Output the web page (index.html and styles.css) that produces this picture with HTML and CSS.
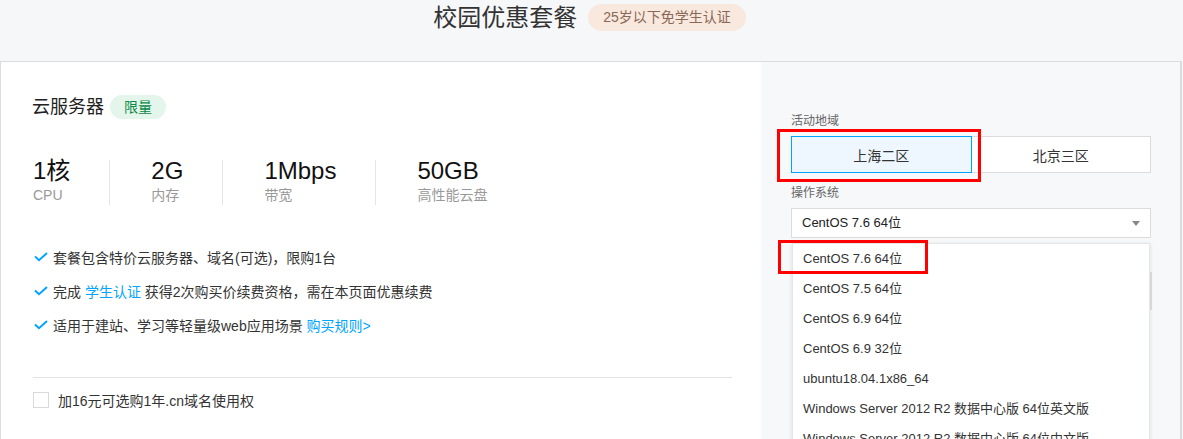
FILE: index.html
```html
<!DOCTYPE html>
<html lang="zh-CN">
<head>
<meta charset="utf-8">
<title>校园优惠套餐</title>
<link rel="stylesheet" href="styles.css">
</head>
<body>
<header class="hero">
  <h1 class="hero-title">校园优惠套餐</h1>
  <span class="hero-badge">25岁以下免学生认证</span>
</header>
<main class="card">
  <section class="product">
    <div class="product-head">
      <h2 class="product-name">云服务器</h2>
      <span class="tag-limit">限量</span>
    </div>
    <div class="specs">
      <div class="spec"><div class="spec-val">1核</div><div class="spec-lbl">CPU</div></div>
      <div class="spec"><div class="spec-val">2G</div><div class="spec-lbl">内存</div></div>
      <div class="spec"><div class="spec-val">1Mbps</div><div class="spec-lbl">带宽</div></div>
      <div class="spec"><div class="spec-val">50GB</div><div class="spec-lbl">高性能云盘</div></div>
    </div>
    <ul class="features">
      <li class="feature"><svg class="check" viewBox="0 0 14 10" width="14" height="10"><path d="M1 4.4 L5 8.2 L13 1" fill="none" stroke="#00a4ff" stroke-width="2"/></svg>套餐包含特价云服务器、域名(可选)，限购1台</li>
      <li class="feature"><svg class="check" viewBox="0 0 14 10" width="14" height="10"><path d="M1 4.4 L5 8.2 L13 1" fill="none" stroke="#00a4ff" stroke-width="2"/></svg>完成 <a class="link">学生认证</a> 获得2次购买价续费资格，需在本页面优惠续费</li>
      <li class="feature"><svg class="check" viewBox="0 0 14 10" width="14" height="10"><path d="M1 4.4 L5 8.2 L13 1" fill="none" stroke="#00a4ff" stroke-width="2"/></svg>适用于建站、学习等轻量级web应用场景 <a class="link">购买规则&gt;</a></li>
    </ul>
    <hr class="sep">
    <label class="addon"><span class="checkbox"></span>加16元可选购1年.cn域名使用权</label>
  </section>
  <aside class="config">
    <div class="field-lbl">活动地域</div>
    <div class="regions">
      <button class="region region-on">上海二区</button>
      <button class="region">北京三区</button>
    </div>
    <div class="field-lbl field-lbl-os">操作系统</div>
    <div class="select-wrap">
      <div class="select">CentOS 7.6 64位<span class="caret"></span></div>
      <ul class="dropdown">
        <li class="opt">CentOS 7.6 64位</li>
        <li class="opt">CentOS 7.5 64位</li>
        <li class="opt">CentOS 6.9 64位</li>
        <li class="opt">CentOS 6.9 32位</li>
        <li class="opt">ubuntu18.04.1x86_64</li>
        <li class="opt">Windows Server 2012 R2 数据中心版 64位英文版</li>
        <li class="opt">Windows Server 2012 R2 数据中心版 64位中文版</li>
      </ul>
      <span class="thumb"></span>
    </div>
    <span class="mark mark-region"></span>
    <span class="mark mark-os"></span>
  </aside>
</main>
</body>
</html>
```

FILE: styles.css
```css
* { box-sizing: border-box; }
html, body { margin: 0; padding: 0; }
body {
  background: #f6f7f9;
  font-family: "Liberation Sans", Arial, "Noto Sans CJK SC", sans-serif;
  color: #333;
  height: 439px;
  overflow: hidden;
}
.hero {
  height: 61px;
  display: flex;
  justify-content: center;
  align-items: flex-start;
  gap: 11px;
  padding-top: 4px;
  padding-right: 4px;
}
.hero-title {
  margin: 0;
  font-size: 24px;
  font-weight: normal;
  line-height: 27px;
  color: #333;
}
.hero-badge {
  height: 27px;
  line-height: 27px;
  padding: 0 15px;
  border-radius: 14px;
  background: #f9e8de;
  color: #8a6856;
  font-size: 14px;
}
.card {
  width: 1182px;
  border: 1px solid #dcdcdc;
  border-right-width: 2px;
  border-bottom: none;
  display: flex;
  height: 400px;
  background: #f7f8fa;
}
.product {
  width: 760px;
  background: #fff;
  padding: 33px 29px 0 31px;
}
.product-head {
  display: flex;
  align-items: center;
  gap: 6px;
  height: 24px;
}
.product-name {
  margin: 0;
  font-size: 18px;
  font-weight: normal;
  line-height: 24px;
  color: #222;
}
.tag-limit {
  height: 24px;
  line-height: 24px;
  padding: 0 14px;
  border-radius: 12px;
  background: #e4f5eb;
  color: #0c8a47;
  font-size: 14px;
}
.specs {
  display: flex;
  margin-top: 41px;
}
.spec {
  height: 45px;
  padding: 0 39px 0 41px;
  border-right: 1px solid #e5e5e5;
}
.spec:first-child { padding-left: 1px; }
.spec:last-child { border-right: none; }
.spec-val {
  font-size: 24px;
  line-height: 22px;
  height: 22px;
  color: #111;
}
.spec-lbl {
  margin-top: 3px;
  font-size: 14px;
  line-height: 20px;
  height: 20px;
  color: #999;
}
.features {
  list-style: none;
  margin: 35px 0 0;
  padding: 0;
}
.feature {
  display: flex;
  align-items: center;
  height: 34px;
  font-size: 14px;
  color: #333;
  white-space: pre;
}
.check {
  margin: 0 5px 0 2px;
  flex: none;
}
.link {
  color: #00a4ff;
  cursor: pointer;
}
.sep {
  margin: 35px 0 0 1px;
  border: none;
  border-top: 1px solid #e2e2e2;
  height: 0;
}
.addon {
  display: flex;
  align-items: center;
  margin-top: 14px;
  margin-left: 1px;
  height: 16px;
  font-size: 14px;
  color: #333;
}
.checkbox {
  width: 16px;
  height: 16px;
  border: 1px solid #d9d9d9;
  background: #fff;
  margin-right: 9px;
}
.config {
  position: relative;
  flex: 1;
  padding: 50px 29px 0 30px;
}
.field-lbl {
  font-size: 12px;
  line-height: 18px;
  color: #666;
}
.field-lbl-os { margin-top: 11px; }
.regions {
  display: flex;
  margin-top: 6px;
}
.region {
  flex: 1;
  height: 37px;
  border: 1px solid #dcdcdc;
  background: #fff;
  font: inherit;
  font-size: 14px;
  color: #333;
  padding: 0;
}
.region + .region { border-left: none; }
.region-on {
  background: #eef7ff;
  border-color: #00a4ff;
}
.select-wrap {
  position: relative;
  margin-top: 6px;
}
.select {
  position: relative;
  height: 30px;
  line-height: 28px;
  border: 1px solid #dcdcdc;
  background: #fff;
  padding-left: 10px;
  font-size: 13px;
  color: #222;
}
.caret {
  position: absolute;
  right: 10px;
  top: 12px;
  border-left: 4px solid transparent;
  border-right: 4px solid transparent;
  border-top: 5px solid #888;
}
.dropdown {
  position: absolute;
  left: 1px;
  right: 1px;
  top: 35px;
  margin: 0;
  padding: 0;
  list-style: none;
  background: #fff;
  border: 1px solid #e6e6e6;
  box-shadow: 0 1px 4px rgba(0, 0, 0, 0.12);
  height: 220px;
}
.opt {
  height: 30px;
  line-height: 30px;
  padding-left: 10px;
  font-size: 13px;
  color: #333;
  white-space: nowrap;
}
.thumb {
  position: absolute;
  right: -1px;
  top: 64px;
  width: 2px;
  height: 38px;
  background: #d8d8d8;
}
.mark {
  position: absolute;
  border: 3px solid #f00;
}
.mark-region {
  left: 16px;
  top: 67px;
  width: 204px;
  height: 53px;
}
.mark-os {
  left: 17px;
  top: 178px;
  width: 150px;
  height: 34px;
}
```
